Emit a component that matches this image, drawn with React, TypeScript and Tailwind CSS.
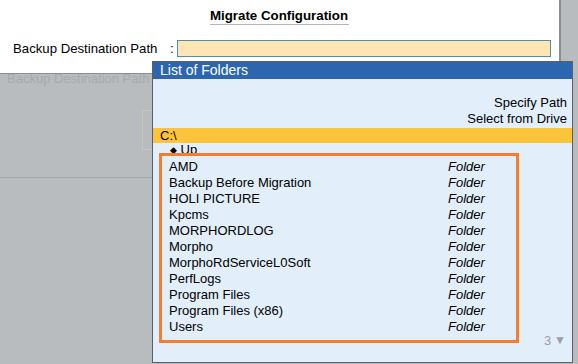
import React from 'react';

const folders = [
  'AMD',
  'Backup Before Migration',
  'HOLI PICTURE',
  'Kpcms',
  'MORPHORDLOG',
  'Morpho',
  'MorphoRdServiceL0Soft',
  'PerfLogs',
  'Program Files',
  'Program Files (x86)',
  'Users',
];

const font = { fontFamily: '"Liberation Sans", Arial, sans-serif' };

export default function App() {
  return (
    <div className="relative w-[578px] h-[364px] overflow-hidden bg-[#b8bcbf] text-black" style={font}>
      {/* main config panel */}
      <div className="w-[561px] h-[74px] bg-white border-r-2 border-b border-[#8a8e92]">
        <div className="flex justify-center pt-[7px]">
          <h1 className="text-[13.3px] font-bold leading-[17px] border-b border-[#b5b5b5] pr-[1px]">
            Migrate Configuration
          </h1>
        </div>
        <div className="flex items-center mt-[14px] pl-[13px] text-[13.2px]">
          <span className="w-[157px]">Backup Destination Path</span>
          <span className="w-[6px]">:</span>
          <div className="ml-[1px] w-[374px] h-[17px] bg-[#fde6b3] border border-[#4f8fae]" />
        </div>
      </div>

      {/* ghost background content */}
      <div className="pl-[7px] text-[13px] leading-[14px] -mt-[2px] text-[#a6aaad]">Backup Destination Path</div>
      <div className="ml-[142px] mt-[24px] w-[12px] h-[40px] border border-[#c8c6b4] border-r-0" />
      <div className="mt-[27px] w-[153px] h-px bg-[#a4a8ab]" />

      {/* list of folders popup */}
      <div className="absolute left-[152px] top-[61px] w-[421px] h-[302px] bg-[#e2eefa] border border-[#5b6066] text-[13px]">
        <div className="h-[17px] bg-[#2c66ae] text-white leading-[17px] pl-[7px] text-[14px]">List of Folders</div>
        <div className="flex flex-col items-end pr-[5px] pt-[16px] leading-[16px]">
          <span>Specify Path</span>
          <span>Select from Drive</span>
        </div>
        <div className="h-[15px] bg-[#fcc43a] leading-[15px] pl-[7px] mt-[1px]">C:\</div>
        <div className="pl-[17px] leading-[14px] h-[16px]">
          <span className="text-[9px] align-[1px]">◆</span> Up
        </div>
        {/* highlighted folder list */}
        <div className="relative -mt-[6px] ml-[6px] w-[360px] h-[190px] bg-[#e2eefa] border-[3px] border-[#f47d30] pl-[7px] pt-[3px]">
          {folders.map((f) => (
            <div key={f} className="flex leading-[16px]">
              <span className="w-[279px]">{f}</span>
              <span className="italic">Folder</span>
            </div>
          ))}
        </div>
        <div className="absolute right-[6px] bottom-[12px] text-[13px] text-[#9a9ea2] flex items-center gap-[3px]">
          <span>3</span>
          <span className="text-[12px]">▼</span>
        </div>
      </div>
    </div>
  );
}
